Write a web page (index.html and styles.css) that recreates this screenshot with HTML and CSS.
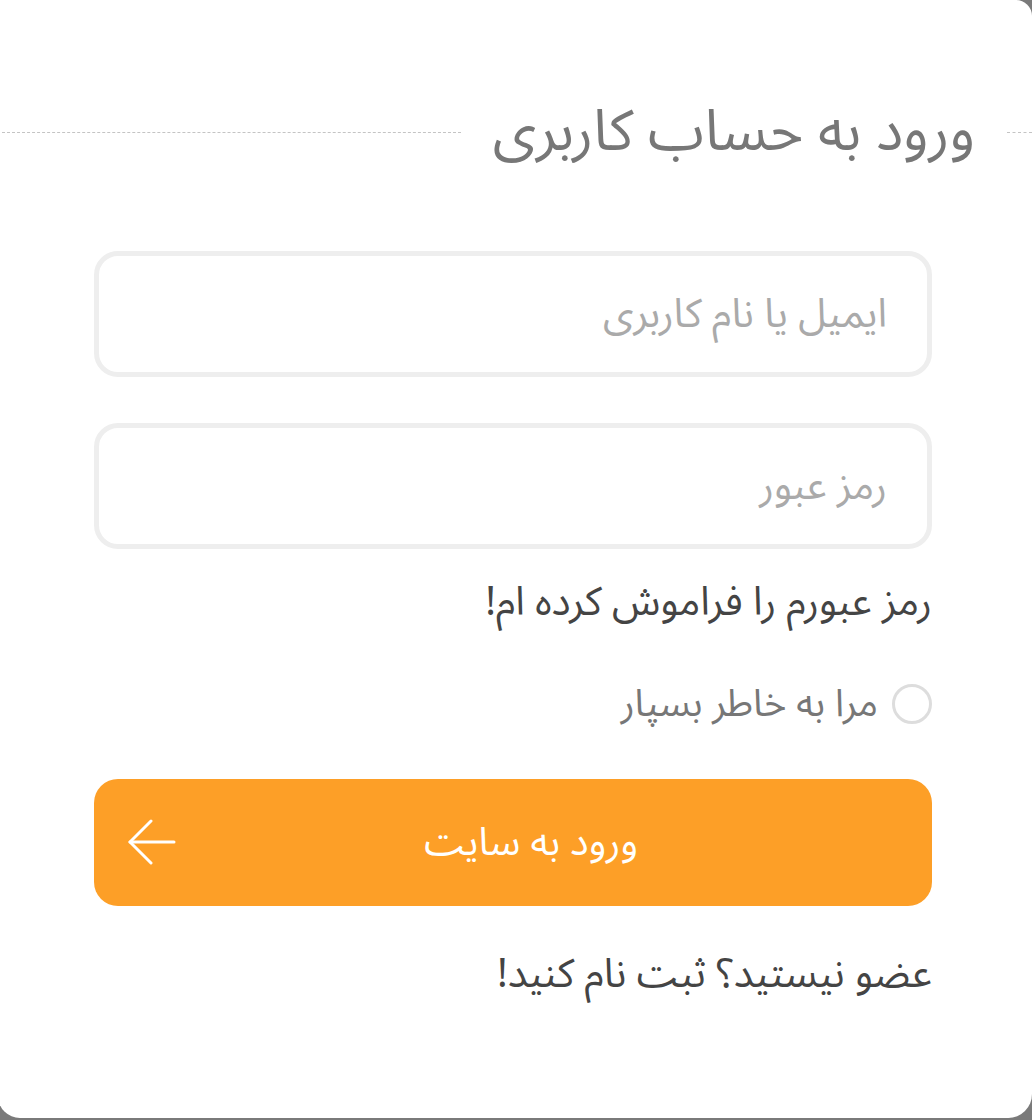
FILE: index.html
```html
<!DOCTYPE html>
<html lang="fa" dir="rtl">
<head>
    <meta charset="UTF-8">
    <meta name="viewport" content="width=device-width, initial-scale=1.0">
    <title>ورود به حساب کاربری</title>
    <link rel="stylesheet" href="styles.css">
</head>
<body>
    <div class="card">
        <div class="title-row">
            <span class="dash dash-short"></span>
            <h1>ورود به حساب کاربری</h1>
            <span class="dash"></span>
        </div>

        <form class="login-form">
            <input type="text" class="field" placeholder="ایمیل یا نام کاربری">
            <input type="password" class="field" placeholder="رمز عبور">
            <a href="#" class="forgot">رمز عبورم را فراموش کرده ام!</a>

            <label class="remember">
                <span class="radio"></span>
                <span>مرا به خاطر بسپار</span>
            </label>

            <button type="button" class="submit">
                <span>ورود به سایت</span>
                <svg class="arrow" width="50" height="46" viewBox="0 0 50 46" fill="none" stroke="#fff" stroke-width="3" stroke-linecap="round" stroke-linejoin="round">
                    <path d="M47 23H3"/>
                    <path d="M24 2L3 23L24 44"/>
                </svg>
            </button>

            <a href="#" class="register">عضو نیستید؟ ثبت نام کنید!</a>
        </form>
    </div>
</body>
</html>
```

FILE: styles.css
```css
body {
    margin: 0;
    padding: 0;
    background: #7a7a7a;
    font-family: 'Noto Sans Arabic', 'DejaVu Sans', sans-serif;
    overflow: hidden;
}
.card {
    width: 1030px;
    height: 1118px;
    background: #fff;
    border-radius: 0 16px 24px 22px;
    box-sizing: border-box;
    padding: 96px 100px 0 92px;
    box-shadow: -4px 0 0 #fff;
}
.title-row {
    display: flex;
    align-items: center;
    margin: 0 -100px 0 -92px;
}
.dash {
    flex: 1;
    border-top: 1px dashed #c4c4c4;
}
.dash-short {
    flex: 0 0 25px;
}
h1 {
    margin: 0;
    padding: 0 32px;
    font-size: 57px;
    font-weight: normal;
    color: #777;
    line-height: 72px;
}
.login-form {
    display: flex;
    flex-direction: column;
    margin-top: 83px;
}
.field {
    height: 126px;
    box-sizing: border-box;
    border: 5px solid #eee;
    border-radius: 24px;
    padding: 0 40px;
    font-family: inherit;
    font-size: 40px;
    color: #444;
    outline: none;
    margin-bottom: 46px;
}
.field::placeholder {
    color: #aaa;
}
.field + .field {
    margin-bottom: 27px;
}
.forgot {
    color: #444;
    text-decoration: none;
    font-size: 40px;
    line-height: 54px;
}
.remember {
    display: flex;
    align-items: center;
    gap: 14px;
    margin-top: 52px;
    color: #777;
    font-size: 38px;
    line-height: 44px;
}
.radio {
    width: 40px;
    height: 40px;
    border: 3px solid #ddd;
    border-radius: 50%;
    box-sizing: border-box;
}
.submit {
    position: relative;
    margin-top: 53px;
    height: 127px;
    padding: 0 0 0 36px;
    border: none;
    border-radius: 24px;
    background: #fd9f27;
    color: #fff;
    font-family: inherit;
    font-size: 39px;
    cursor: pointer;
}
.arrow {
    position: absolute;
    left: 33px;
    top: 40px;
}
.register {
    margin-top: 42px;
    color: #444;
    text-decoration: none;
    font-size: 40px;
    line-height: 54px;
}
```
